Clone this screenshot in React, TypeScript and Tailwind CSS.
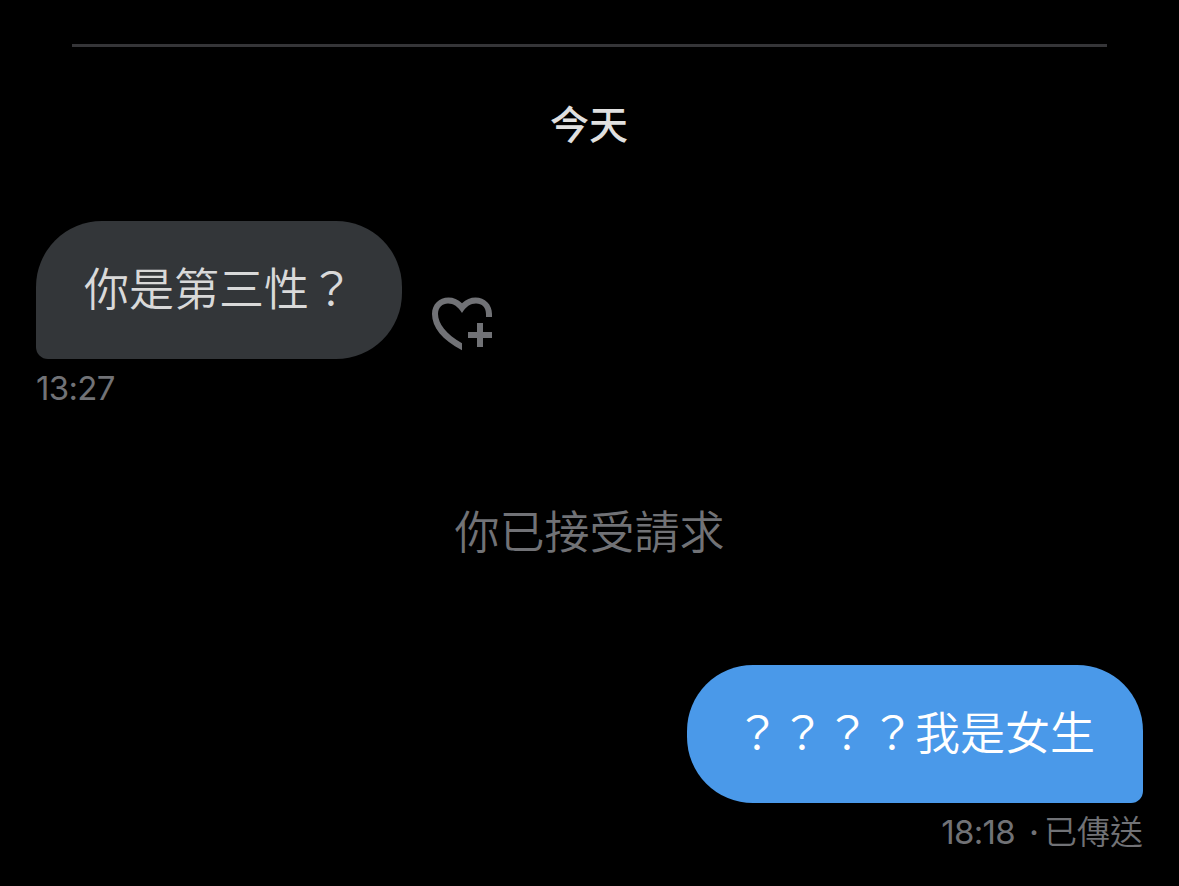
import clsx from 'clsx';

interface Message {
    text: string;
    time: string;
    status?: string;
    isMine: boolean;
}

const received: Message = { text: '你是第三性？', time: '13:27', isMine: false };
const sent: Message = { text: '？？？？我是女生', time: '18:18', status: '已傳送', isMine: true };

function AddReactionIcon() {
    return (
        <svg className="w-[62px] h-[56px]" viewBox="0 0 62 56" fill="#717276">
            <path d="M31 8.300C27 4.500 22.500 2.500 17.500 2.500C8 2.500 1 9.500 1 19C1 32 11 45 31 55.300V48.300C15 39 7 28.500 7 19C7 12.500 11.500 8.500 17 8.500C22.500 8.500 27 11.500 31 18C35 11.500 39.500 8.500 45 8.500C51 8.500 55 12.500 55 19V22H61V19C61 9.500 54 2.500 44.500 2.500C39.500 2.500 35 4.500 31 8.300Z" />
            <path d="M46 28H52V37H61V43H52V52H46V43H37V37H46Z" />
        </svg>
    );
}

function ChatMessage({ message }: { message: Message }) {
    return (
        <div className={clsx('flex flex-col', message.isMine ? 'items-end' : 'items-start')}>
            <div className="flex items-end">
                <div className={clsx(
                    'h-[138px] flex items-center rounded-t-[66px] pb-[1px] text-[45px] leading-none font-[350] whitespace-nowrap',
                    message.isMine
                        ? 'w-[456px] pl-[48px] rounded-bl-[66px] rounded-br-[12px] bg-[#4a99e9] text-white'
                        : 'w-[366px] pl-[48px] rounded-br-[66px] rounded-bl-[12px] bg-[#333639] text-[#d9d9d9]'
                )}>
                    {message.text}
                </div>
                {!message.isMine && <div className="ml-[29px] mb-[8px]"><AddReactionIcon /></div>}
            </div>
            <div className="h-[60px] flex items-center pb-[1px] text-[33px] leading-none font-[350] text-[#717276]">
                <span className="font-normal tracking-[-0.7px]">{message.time}</span>
                {message.status && (
                    <span className="ml-[14px] flex items-center">
                        <span className="mr-[5px] font-medium">·</span>
                        {message.status}
                    </span>
                )}
            </div>
        </div>
    );
}

export default function App() {
    return (
        <div className="w-[1179px] h-[886px] overflow-hidden bg-black px-[36px] pt-[44px] font-['Inter','Noto_Sans_CJK_TC',sans-serif]">
            <div className="mx-[36px] h-[3px] bg-[#353538]" />
            <div className="h-[174px] pt-[58px] pr-[1px] text-center text-[39px] leading-[40px] font-medium text-[#e0e0e0]">今天</div>
            <ChatMessage message={received} />
            <div className="h-[246px] pt-[91px] text-center text-[45px] leading-[46px] font-[350] text-[#717276]">你已接受請求</div>
            <ChatMessage message={sent} />
        </div>
    );
}
